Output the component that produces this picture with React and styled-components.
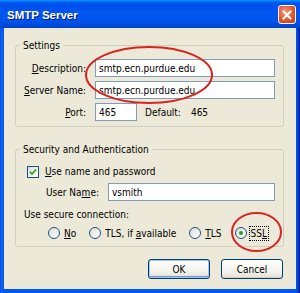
import React from "react";
import styled, { createGlobalStyle } from "styled-components";

const Global = createGlobalStyle`
  html, body { margin: 0; padding: 0; background: #ffffff; }
  body { font-family: "DejaVu Sans Condensed", "Liberation Sans", sans-serif; font-size: 10px; color: #000; }
`;

const Window = styled.div`
  position: relative;
  width: 300px;
  height: 293px;
  box-sizing: border-box;
  display: flex;
  flex-direction: column;
  background: linear-gradient(90deg, #0831d9 0px, #166aee 1px, #0058ee 3px, #0058ee 296px, #0043cf 298px, #00138c 300px);
  overflow: hidden;
`;

const TitleBar = styled.div`
  height: 28px;
  flex: none;
  display: flex;
  align-items: center;
  justify-content: space-between;
  padding: 0 4px 0 7px;
  background: linear-gradient(180deg, #0997ff 0px, #0053ee 3px, #0050ee 6px, #0058f0 14px, #0052e7 22px, #0045d6 27px, #0040c8 28px);
`;

const Title = styled.span`
  font-family: "Liberation Sans", Arial, sans-serif;
  font-weight: bold;
  font-size: 11.5px;
  color: #ffffff;
  text-shadow: 1px 1px 0 #0a1e7a;
  margin-top: 1px;
`;

const CloseButton = styled.div`
  width: 16px;
  height: 17px;
  border: 1px solid #ffffff;
  border-radius: 3px;
  background: radial-gradient(circle at 40% 35%, #f29a7d 0%, #e2552d 55%, #c3380f 100%);
  display: flex;
  align-items: center;
  justify-content: center;
  margin-top: 1px;
`;

const Client = styled.div`
  flex: 1;
  margin: 0 4px 4px;
  background: #ece9d8;
  padding: 11px 12px 0 11px;
  display: flex;
  flex-direction: column;
`;

const Group = styled.fieldset`
  margin: ${(p) => p.$top || 0}px 0 0;
  padding: 0;
  border: 1px solid #d0d0bf;
  border-radius: 3px;
  min-width: 0;
`;

const Legend = styled.legend`
  margin-left: 4px;
  padding: 0 3px;
  line-height: 13px;
  font-size: 10px;
`;

const SettingsGrid = styled.div`
  display: grid;
  grid-template-columns: 70px 1fr;
  column-gap: 9px;
  row-gap: 4px;
  align-items: center;
  padding: 7px 8px 5px 0;
`;

const Label = styled.label`
  text-align: right;
  white-space: nowrap;
`;

const Input = styled.div`
  height: 18px;
  box-sizing: border-box;
  border: 1px solid #7f9db9;
  background: #ffffff;
  padding-left: 3px;
  display: flex;
  align-items: center;
  width: ${(p) => (p.$w ? `${p.$w}px` : "auto")};
  flex: ${(p) => (p.$w ? "none" : "1")};
`;

const PortRow = styled.div`
  display: flex;
  align-items: center;
`;

const Plain = styled.span`
  margin-left: ${(p) => p.$ml || 0}px;
`;

const SecurityBody = styled.div`
  padding: 9px 8px 6px 8px;
  display: flex;
  flex-direction: column;
`;

const CheckRow = styled.div`
  display: flex;
  align-items: center;
  gap: 6px;
  height: 13px;
  margin-left: 3px;
`;

const CheckBox = styled.div`
  width: 12px;
  height: 12px;
  box-sizing: border-box;
  border: 1px solid #1c5180;
  background: linear-gradient(135deg, #dcdcd7, #ffffff);
  display: flex;
  align-items: center;
  justify-content: center;
`;

const UserRow = styled.div`
  display: flex;
  align-items: center;
  margin-top: 5px;
  padding-left: 22px;
  gap: 9px;
`;

const SecureLabel = styled.div`
  margin-top: 7px;
  line-height: 13px;
`;

const RadioRow = styled.div`
  display: flex;
  align-items: center;
  height: 14px;
  margin-top: 5px;
  padding-left: 24px;
  gap: 12px;
  white-space: nowrap;
`;

const RadioItem = styled.div`
  display: flex;
  flex: none;
  align-items: center;
  gap: 3px;
`;

const RadioCircle = styled.div`
  width: 12px;
  height: 12px;
  box-sizing: border-box;
  border-radius: 50%;
  border: 1px solid #1c5180;
  background: linear-gradient(135deg, #dcdcd7, #ffffff);
  display: flex;
  align-items: center;
  justify-content: center;
  &::after {
    content: "";
    width: 4px;
    height: 4px;
    border-radius: 50%;
    background: ${(p) => (p.$on ? "#21a121" : "transparent")};
  }
`;

const RadioText = styled.span`
  padding: 1px;
  outline: ${(p) => (p.$focus ? "1px dotted #000" : "none")};
`;

const ButtonRow = styled.div`
  display: flex;
  justify-content: flex-end;
  gap: 11px;
  margin-top: 12px;
  padding-right: 1px;
`;

const Button = styled.div`
  width: 62px;
  height: 20px;
  box-sizing: border-box;
  border: 1px solid #003c74;
  border-radius: 3px;
  background: linear-gradient(180deg, #ffffff 0%, #f4f3ee 60%, #e3e0d3 100%);
  box-shadow: ${(p) => (p.$default ? "inset 0 0 0 1px #a9c4ee, inset 0 -1px 0 1px #6f95dc" : "inset 0 -1px 0 #d6d0c5")};
  display: flex;
  align-items: center;
  justify-content: center;
`;

const Annotation = styled.svg`
  position: absolute;
  left: ${(p) => p.$x}px;
  top: ${(p) => p.$y}px;
  pointer-events: none;
  overflow: visible;
`;

const U = styled.span`
  text-decoration: underline;
`;

export default function App() {
  return (
    <>
      <Global />
      <Window>
        <TitleBar>
          <Title>SMTP Server</Title>
          <CloseButton>
            <svg width="10" height="10" viewBox="0 0 10 10">
              <path d="M1.5 1.5 L8.5 8.5 M8.5 1.5 L1.5 8.5" stroke="#ffffff" strokeWidth="2" strokeLinecap="square" />
            </svg>
          </CloseButton>
        </TitleBar>
        <Client>
          <Group>
            <Legend>Settings</Legend>
            <SettingsGrid>
              <Label><U>D</U>escription:</Label>
              <Input>smtp.ecn.purdue.edu</Input>
              <Label><U>S</U>erver Name:</Label>
              <Input>smtp.ecn.purdue.edu</Input>
              <Label><U>P</U>ort:</Label>
              <PortRow>
                <Input $w={42}>465</Input>
                <Plain $ml={8}>Default:</Plain>
                <Plain $ml={10}>465</Plain>
              </PortRow>
            </SettingsGrid>
          </Group>
          <Group $top={16}>
            <Legend>Security and Authentication</Legend>
            <SecurityBody>
              <CheckRow>
                <CheckBox>
                  <svg width="8" height="8" viewBox="0 0 8 8">
                    <path d="M1 3.8 L3 6 L7 1.5" stroke="#21a121" strokeWidth="1.7" fill="none" />
                  </svg>
                </CheckBox>
                <span><U>U</U>se name and password</span>
              </CheckRow>
              <UserRow>
                <Label>User Na<U>m</U>e:</Label>
                <Input>vsmith</Input>
              </UserRow>
              <SecureLabel>Use secure connection:</SecureLabel>
              <RadioRow>
                <RadioItem><RadioCircle /><RadioText><U>N</U>o</RadioText></RadioItem>
                <RadioItem><RadioCircle /><RadioText>TLS, if <U>a</U>vailable</RadioText></RadioItem>
                <RadioItem><RadioCircle /><RadioText><U>T</U>LS</RadioText></RadioItem>
                <RadioItem><RadioCircle $on /><RadioText $focus>SS<U>L</U></RadioText></RadioItem>
              </RadioRow>
            </SecurityBody>
          </Group>
          <ButtonRow>
            <Button $default>OK</Button>
            <Button>Cancel</Button>
          </ButtonRow>
        </Client>
        <Annotation $x={84} $y={45} width="130" height="60">
          <ellipse cx="65" cy="30" rx="63" ry="28" fill="none" stroke="#d9231f" strokeWidth="2" />
        </Annotation>
        <Annotation $x={230} $y={211} width="53" height="42">
          <ellipse cx="26.5" cy="21" rx="24.5" ry="19" fill="none" stroke="#d9231f" strokeWidth="2" />
        </Annotation>
      </Window>
    </>
  );
}
